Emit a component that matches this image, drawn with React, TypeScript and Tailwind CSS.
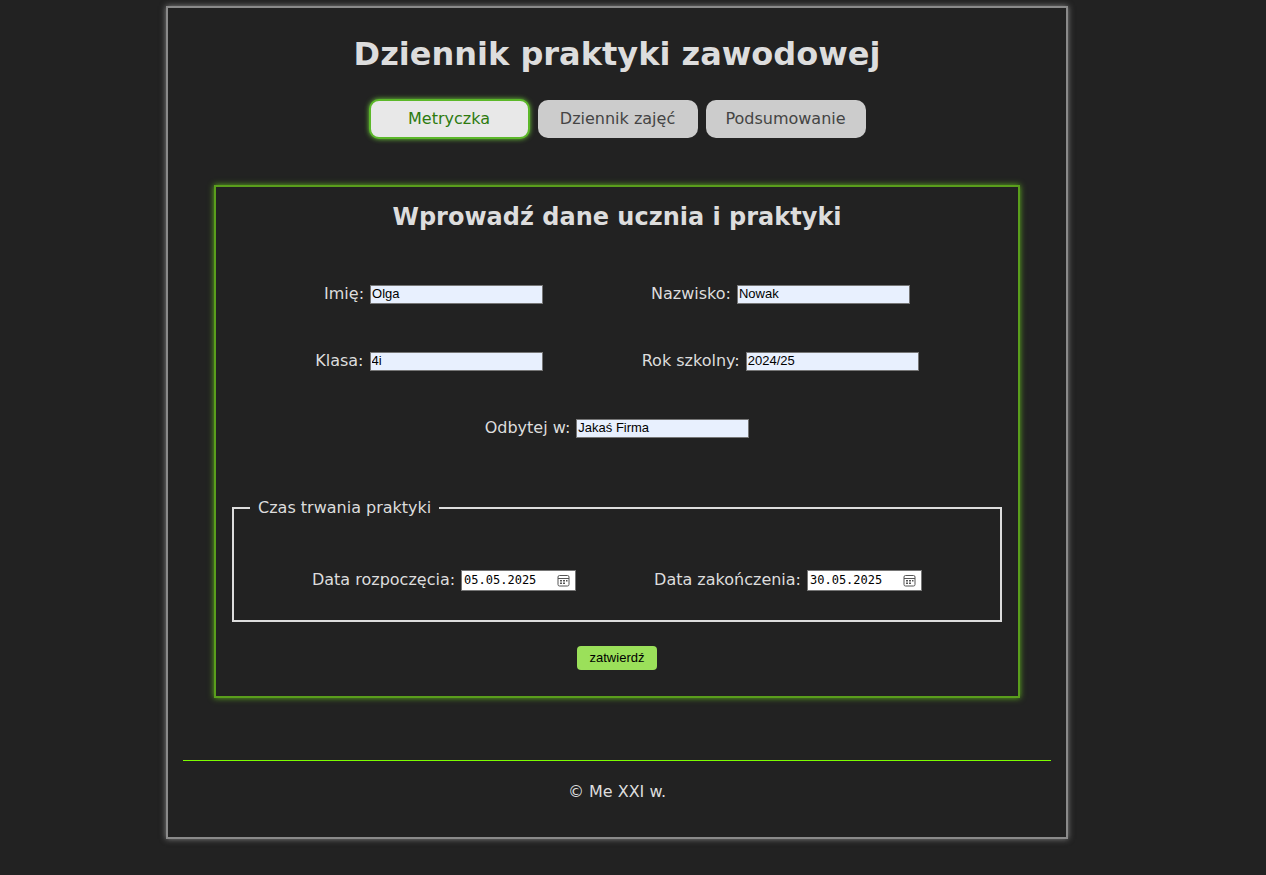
import React from "react"

const FONT = { fontFamily: '"DejaVu Sans", Verdana, sans-serif' }

function Field({ label, value, width = "w-[173px]" }: { label: string; value: string; width?: string }) {
  return (
    <label className="flex items-center gap-[6px] text-[16px] text-[#dddddd]">
      <span>{label}</span>
      <input
        type="text"
        defaultValue={value}
        className={`${width} h-[19px] border border-[#767676] bg-[#e8f0fe] px-[1px] text-[13px] text-black outline-none`}
        style={{ fontFamily: '"Liberation Sans", Arial, sans-serif' }}
      />
    </label>
  )
}

function DateField({ label, value }: { label: string; value: string }) {
  return (
    <label className="flex items-center gap-[6px] text-[16px] text-[#dddddd]">
      <span>{label}</span>
      <span className="flex h-[21px] w-[115px] items-center justify-between border border-[#767676] bg-white pl-[2px] pr-[5px]">
        <span className="text-[12px] text-black" style={{ fontFamily: '"DejaVu Sans Mono", monospace' }}>
          {value}
        </span>
        <svg width="13" height="13" viewBox="0 0 13 13" fill="none">
          <rect x="1" y="1.5" width="11" height="10.5" rx="1.5" stroke="#555" strokeWidth="1" />
          <line x1="1" y1="4.5" x2="12" y2="4.5" stroke="#555" strokeWidth="1" />
          <rect x="3" y="6" width="2" height="1.5" fill="#555" />
          <rect x="6" y="6" width="2" height="1.5" fill="#555" />
          <rect x="9" y="6" width="1.5" height="1.5" fill="#555" />
          <rect x="3" y="8.5" width="2" height="1.5" fill="#555" />
          <rect x="6" y="8.5" width="2" height="1.5" fill="#555" />
        </svg>
      </span>
    </label>
  )
}

export default function App() {
  return (
    <div className="min-h-[875px] w-full bg-[#222222] pt-[6px]" style={FONT}>
      <div className="ml-[166px] flex w-[902px] flex-col border-2 border-[#8a8a8a] bg-[#222222] px-[15px] shadow-[0_0_6px_rgba(200,200,200,0.6)]">
        <h1 className="mt-[27px] text-center text-[32px] font-bold leading-[38px] text-[#dddddd]">
          Dziennik praktyki zawodowej
        </h1>

        <nav className="mt-[26px] flex justify-center gap-[8px]">
          <button className="h-[40px] w-[161px] rounded-[10px] border-2 border-[#5cb82a] bg-[#e8e8e8] text-[16px] text-[#2d7a0f] shadow-[0_0_5px_#6fcf3a]">
            Metryczka
          </button>
          <button className="h-[38px] w-[160px] self-center rounded-[10px] bg-[#cccccc] text-[16px] text-[#444444]">
            Dziennik zajęć
          </button>
          <button className="h-[38px] w-[160px] self-center rounded-[10px] bg-[#cccccc] text-[16px] text-[#444444]">
            Podsumowanie
          </button>
        </nav>

        <form
          className="mx-[31px] mt-[46px] flex flex-col border-2 border-[#5a9e1c] shadow-[0_0_6px_#5fae1f]"
          onSubmit={e => e.preventDefault()}
        >
          <h2 className="mt-[15px] text-center text-[24px] font-bold leading-[30px] text-[#dddddd]">
            Wprowadź dane ucznia i praktyki
          </h2>

          <div className="mt-[50px] flex justify-evenly">
            <Field label="Imię:" value="Olga" />
            <Field label="Nazwisko:" value="Nowak" />
          </div>
          <div className="mt-[43px] flex justify-evenly">
            <Field label="Klasa:" value="4i" />
            <Field label="Rok szkolny:" value="2024/25" />
          </div>
          <div className="mt-[43px] flex justify-center">
            <Field label="Odbytej w:" value="Jakaś Firma" />
          </div>

          <fieldset className="mx-[16px] mt-[58px] border-2 border-[#dddddd] px-0 pb-[28px] pt-[50px]">
            <legend className="ml-[16px] px-[8px] text-[16px] leading-[20px] text-[#dddddd]">Czas trwania praktyki</legend>
            <div className="flex justify-evenly">
              <DateField label="Data rozpoczęcia:" value="05.05.2025" />
              <DateField label="Data zakończenia:" value="30.05.2025" />
            </div>
          </fieldset>

          <div className="mb-[26px] mt-[24px] flex justify-center">
            <button
              type="submit"
              className="h-[24px] w-[80px] rounded-[4px] bg-[#9be05a] text-[13px] text-black"
              style={{ fontFamily: '"Liberation Sans", Arial, sans-serif' }}
            >
              zatwierdź
            </button>
          </div>
        </form>

        <div className="mt-[62px] h-px bg-[#7cfc00]" />
        <footer className="pb-[35px] pt-[21px] text-center text-[16px] leading-[20px] text-[#dddddd]">© Me XXI w.</footer>
      </div>
    </div>
  )
}
